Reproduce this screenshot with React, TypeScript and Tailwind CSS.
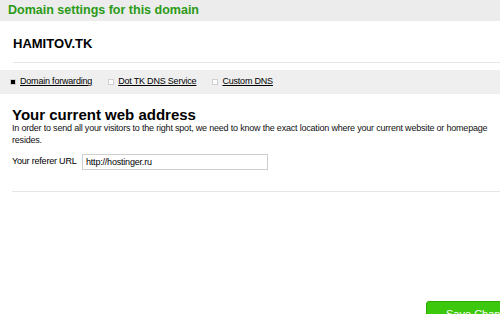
export default function App() {
  const tabs = [
    { label: "Domain forwarding", active: true },
    { label: "Dot TK DNS Service", active: false },
    { label: "Custom DNS", active: false },
  ];
  return (
    <div className="relative h-[314px] w-[500px] overflow-hidden bg-white font-['Liberation_Sans',Arial,sans-serif] text-black">
      <div className="h-[21px] bg-[#ececec] pl-[8px] pt-[2px] text-[12.5px] font-bold leading-[16px] text-[#2b9a17]">
        Domain settings for this domain
      </div>
      <div className="ml-[13px] border-b border-[#e6e6e6] pb-[11px] pt-[15px] text-[13px] font-bold leading-[15px]">
        HAMITOV.TK
      </div>
      <div className="mt-[7px] flex h-[24px] items-center gap-[16px] bg-[#efefef] pl-[10px] text-[9px] tracking-[-0.2px]">
        {tabs.map((t) => (
          <div key={t.label} className="flex items-center gap-[4px]">
            <span className="flex h-[6px] w-[6px] items-center justify-center border border-[#d0d0d0] bg-white">
              {t.active ? <span className="h-[4px] w-[4px] bg-black" /> : null}
            </span>
            <span className="underline">{t.label}</span>
          </div>
        ))}
      </div>
      <div className="ml-[12px] border-b border-[#e6e6e6] pb-[21px]">
        <div className="mt-[14px] text-[15px] font-bold leading-[14px]">Your current web address</div>
        <p className="text-[9px] leading-[12px] tracking-[-0.2px] text-[#111]">
          In order to send all your visitors to the right spot, we need to know the exact location where your current website or homepage resides.
        </p>
        <div className="mt-[8px] flex items-center">
          <span className="w-[70px] whitespace-nowrap text-[9px] tracking-[-0.2px]">Your referer URL</span>
          <input
            defaultValue="http://hostinger.ru"
            className="h-[16px] w-[186px] border border-[#cfcfcf] px-[3px] text-[9px] tracking-[-0.2px] outline-none"
          />
        </div>
      </div>
      <button className="absolute left-[426px] top-[301px] h-[24px] w-[100px] rounded-tl-[3px] border border-[#2aa800] bg-[#3cc80c] pl-[19px] pt-[2px] text-left text-[11px] leading-[12px] text-white">
        Save Changes
      </button>
    </div>
  );
}
